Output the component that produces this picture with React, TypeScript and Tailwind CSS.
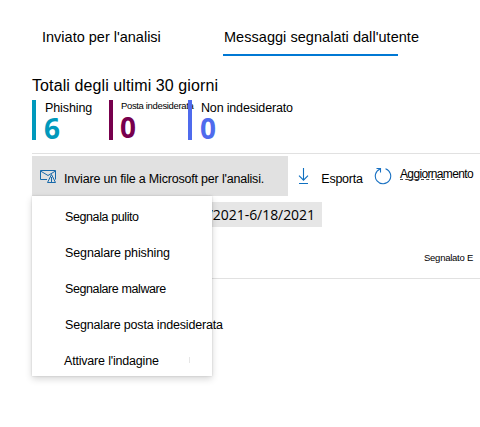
const totals = [
  { label: 'Phishing', value: 6, width: 'w-[77px]', bar: 'bg-[#0099bc]', color: 'text-[#0099bc]', text: 'text-[12.5px] tracking-[-0.1px] pt-[1px]', pad: 'pl-[9px]' },
  { label: 'Posta indesiderata', value: 0, width: 'w-[79px]', bar: 'bg-[#77004d]', color: 'text-[#77004d]', text: 'text-[9.5px] tracking-[-0.35px] -mt-[1px] pb-[2px]', pad: 'pl-[8px]' },
  { label: 'Non indesiderato', value: 0, width: 'w-[120px]', bar: 'bg-[#4f6bed]', color: 'text-[#4f6bed]', text: 'text-[12.5px] tracking-[-0.17px] pt-[1px]', pad: 'pl-[9px]' },
];

const actions = [
  { label: 'Segnala pulito', style: 'pl-[33px] tracking-[-0.4px]' },
  { label: 'Segnalare phishing', style: 'pl-[33px] tracking-[-0.12px]' },
  { label: 'Segnalare malware', style: 'pl-[33px] tracking-[-0.4px]' },
  { label: 'Segnalare posta indesiderata', style: 'pl-[33px] tracking-[-0.17px]' },
  { label: "Attivare l'indagine", style: 'pl-[32px] tracking-[-0.19px]' },
];

function MailWarningIcon() {
  return (
    <svg className="shrink-0" width="17" height="14" viewBox="0 0 17 14" fill="none" stroke="#1769aa" strokeWidth="1">
      <path d="M7 10.500H.5v-9h15v9M.5 2l7.500 4.500L15.500 2" />
      <path d="M7.500 13.500 11.500 5.500l4 8z" fill="#e1e1e1" />
      <path d="M11.500 8v5.500" />
    </svg>
  );
}

function DownloadIcon() {
  return (
    <svg className="shrink-0" width="11" height="18" viewBox="0 0 11 18" fill="none" stroke="#0f70c0" strokeWidth="1.1">
      <path d="M5.500 1v12M1 8.700l4.500 4.500L10 8.700M1 16.500h9" />
    </svg>
  );
}

function RefreshIcon() {
  return (
    <svg className="shrink-0" width="18" height="18" viewBox="0 0 18 18" fill="none" stroke="#1971c2" strokeWidth="1.1">
      <path d="M11.500 1.800A7.700 7.700 0 1 1 6 2M2.500 1.500h4v4" />
    </svg>
  );
}

export default function App() {
  return (
    <div className="relative h-[427px] w-[480px] overflow-hidden bg-white font-['Liberation_Sans',Arial,sans-serif] text-black">
      <nav className="flex h-14 items-end pl-[42px] text-[14.5px] whitespace-nowrap">
        <div className="h-[30px] w-[181px] leading-[22px]">Inviato per l'analisi</div>
        <div className="h-[30px] w-[175px] border-b-2 border-[#0078d4] pl-[1px] leading-[22px] tracking-[0.04px]">Messaggi segnalati dall'utente</div>
      </nav>

      <h1 className="mt-5 h-6 pl-8 text-[16px] leading-5 tracking-[0.1px] whitespace-nowrap">Totali degli ultimi 30 giorni</h1>

      <section className="flex h-10 pl-8 whitespace-nowrap">
        {totals.map((t) => (
          <div key={t.label} className={`flex ${t.width}`}>
            <div className={`h-10 w-1 shrink-0 ${t.bar}`} />
            <div className={t.pad}>
              <div className={`h-[15px] leading-[14px] ${t.text}`}>{t.label}</div>
              <div className={`-ml-px font-['Open_Sans','Noto_Sans',sans-serif] text-[28px] leading-[26px] font-bold ${t.color}`}>{t.value}</div>
            </div>
          </div>
        ))}
      </section>

      <div className="mt-[13px] ml-8 h-px bg-[#e1e1e1]" />

      <div className="mt-[2px] flex h-10 pl-8 text-[12.5px] whitespace-nowrap">
        <button className="flex w-64 shrink-0 items-center bg-[#e1e1e1] pl-2">
          <MailWarningIcon />
          <span className="ml-[7px] pt-[6px] tracking-[-0.19px]">Inviare un file a Microsoft per l'analisi.</span>
        </button>
        <button className="flex shrink-0 items-center pl-[10px]">
          <DownloadIcon />
          <span className="ml-3 w-[42px] pt-[6px] tracking-[-0.25px]">Esporta</span>
        </button>
        <button className="flex shrink-0 items-center pl-[11px]">
          <RefreshIcon />
          <span className="relative mb-1 ml-[8px] text-[12px] leading-[14px] tracking-[-0.65px]">
            Aggiornamento
            <span className="absolute top-[12px] left-0 w-[45px] border-b border-dashed border-[#444]" />
          </span>
        </button>
      </div>

      <div className="mt-[6px] ml-8 flex h-[25px] w-[290px] items-center justify-end bg-[#e6e6e6] pr-[7px] font-['Open_Sans','Noto_Sans',sans-serif] text-[14px] tracking-[-0.05px]">
        6/11/2021-6/18/2021
      </div>

      <div className="mt-[21px] ml-8 flex h-[31px] items-start justify-end border-b border-[#e1e1e1] pr-[7px] text-[9.5px] leading-5 tracking-[-0.25px]">
        Segnalato E
      </div>

      <div className="absolute top-[196px] left-8 h-[180px] w-[180px] bg-white pt-[3px] shadow-[0_3px_7px_rgba(0,0,0,0.16),0_0_2px_rgba(0,0,0,0.15)]">
        {actions.map((a) => (
          <div key={a.label} className={`h-9 text-[12.5px] leading-9 whitespace-nowrap ${a.style}`}>{a.label}</div>
        ))}
        <div className="absolute top-[161px] left-[157px] h-[6px] w-px bg-[#e6e6e6]" />
      </div>
    </div>
  );
}
